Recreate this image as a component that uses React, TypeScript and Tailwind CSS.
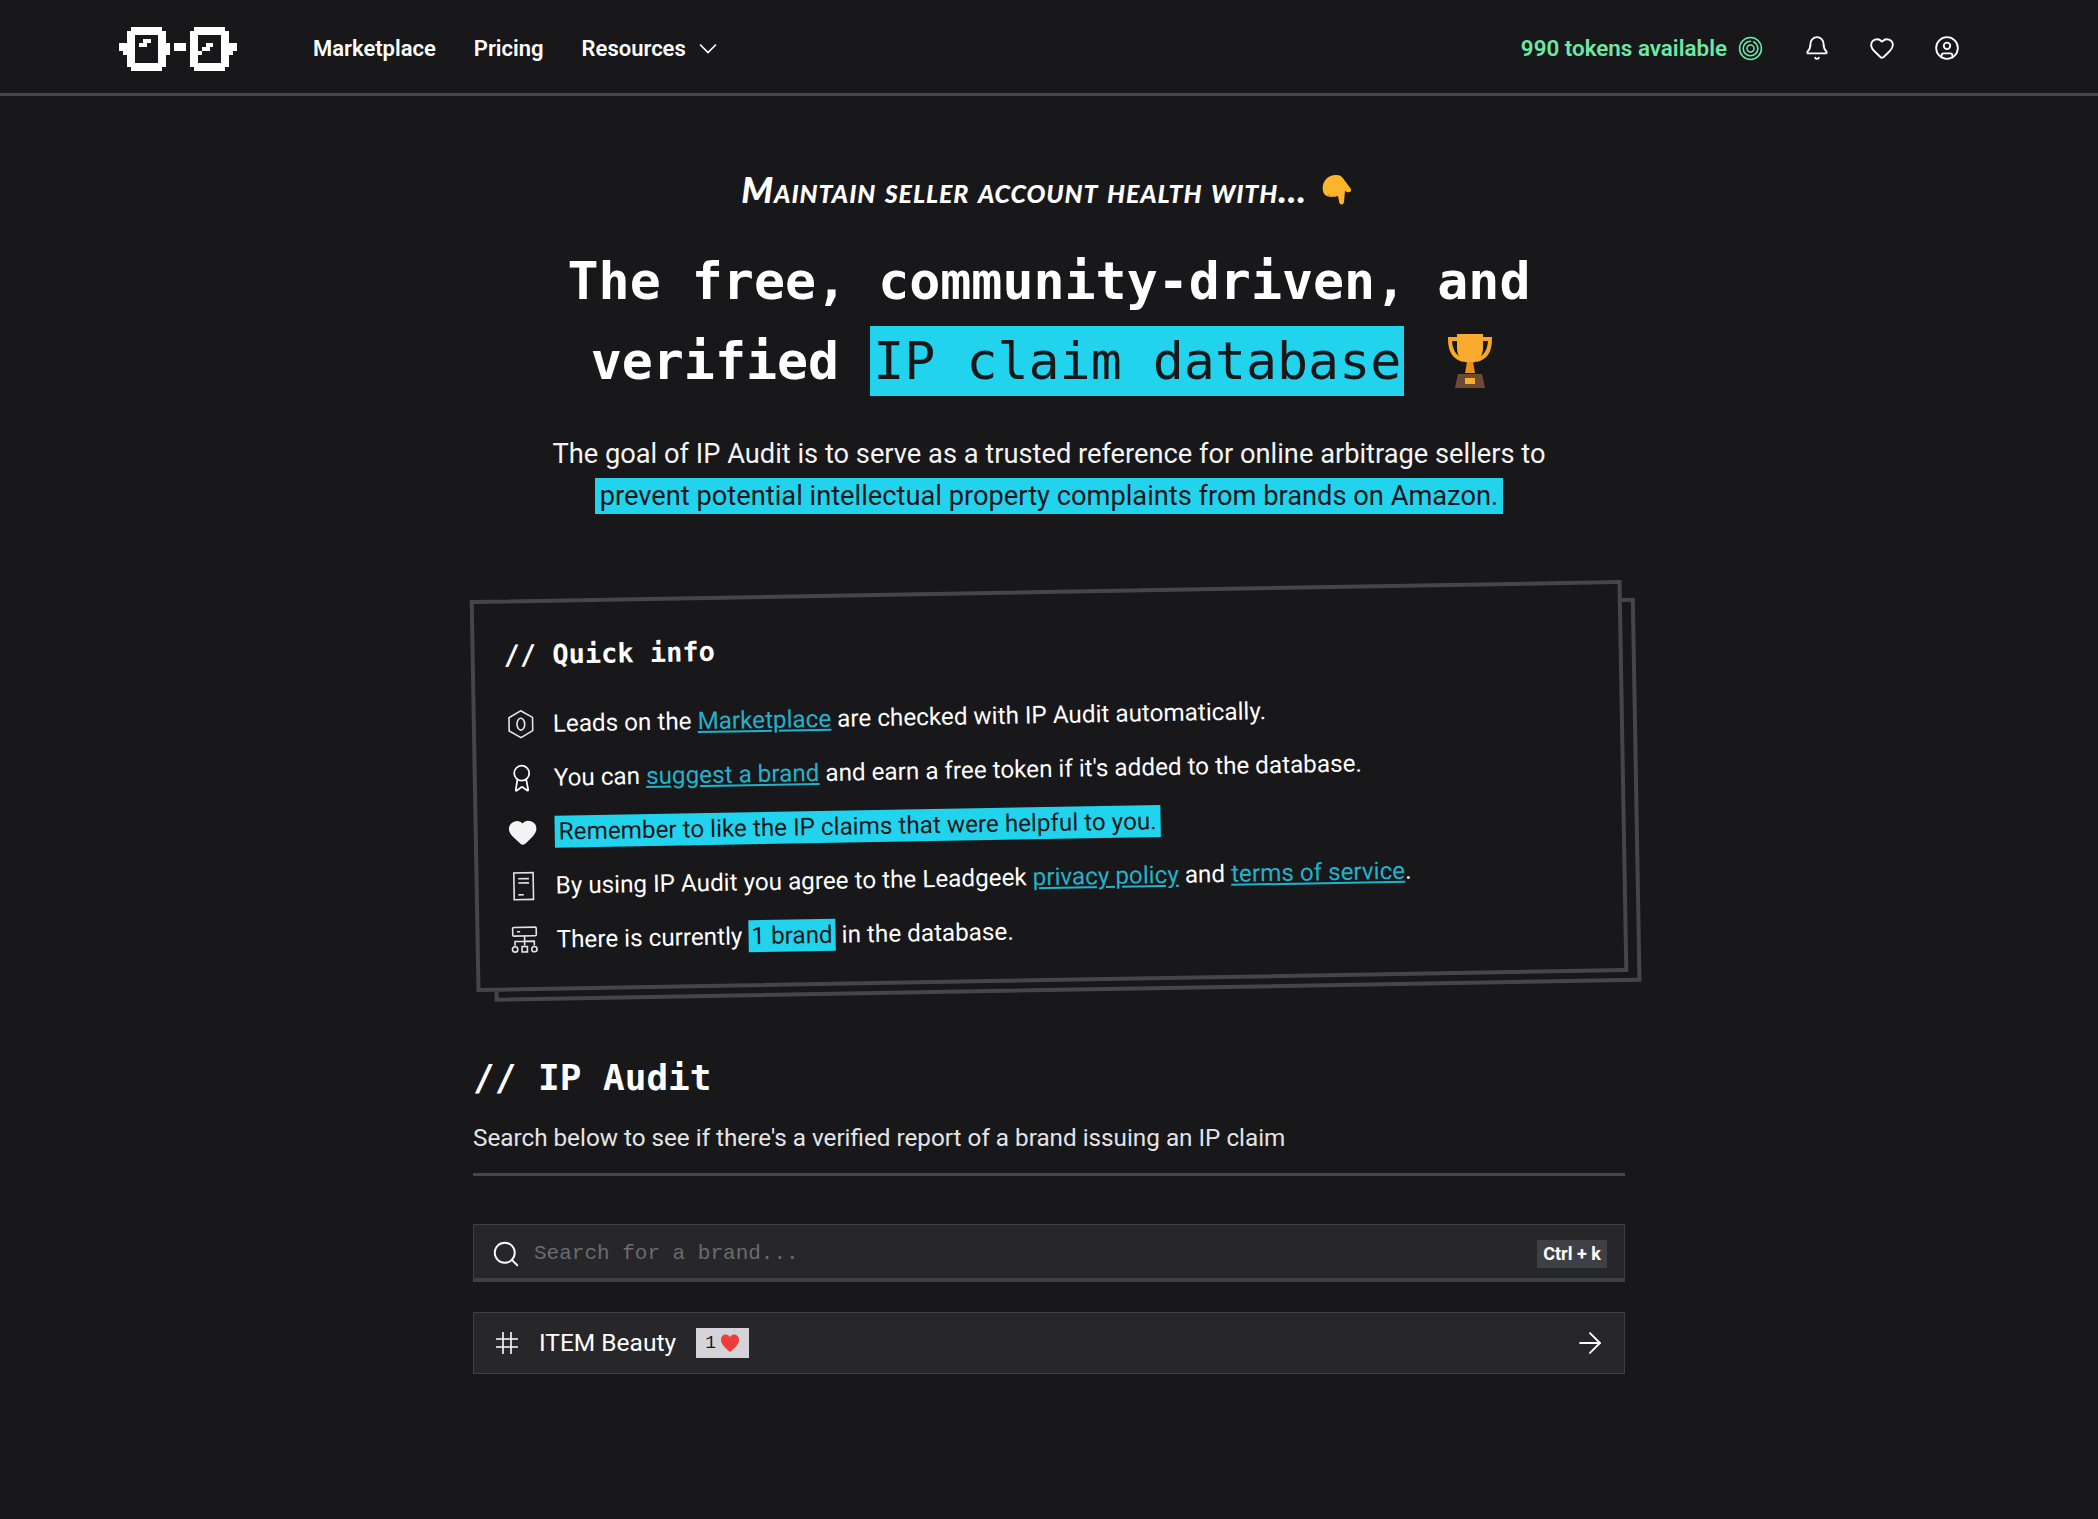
import React from 'react';
import { Bell, Heart, CircleUser, Search, ArrowRight, Award } from 'lucide-react';

const LOGO_ROWS = [
  '...########........########...',
  '..##########......##########..',
  '..##......##......##......##..',
  '..##..##..##......##......##..',
  '####.##...###.###.##..##..####',
  '####......###.###.##.##...####',
  '.###......###.....###.....###.',
  '..##......##......##......##..',
  '..##......##......##......##..',
  '..##########......##########..',
  '...########........########...',
];

const Logo = () => (
  <svg width="118" height="44" viewBox="0 0 30 11" shapeRendering="crispEdges" fill="#fff">
    {LOGO_ROWS.map((row, y) =>
      row.split('').map((c, x) => (c === '#' ? <rect key={`${x}-${y}`} x={x} y={y} width="1.02" height="1.02" /> : null)),
    )}
  </svg>
);

const TokenIcon = () => (
  <svg width="25" height="25" viewBox="0 0 24 24" fill="none" stroke="#6ee7a7" strokeWidth="1.5" strokeLinecap="round">
    <circle cx="12" cy="12" r="10.5" />
    <path d="M12 5a7 7 0 1 0 7 7" />
    <path d="M19 12a7 7 0 0 0-4-6.3" />
    <circle cx="12" cy="12" r="3.4" />
  </svg>
);

const PointDown = () => (
  <svg width="30" height="32" viewBox="0 0 30 32">
    <path d="M2 18C0 8 8 1 16 2c4 0 6 3 8 6l6 8c1 2-2 4-4 3l-2-1-1 11c-1 4-5 3-5-1l-1-5c-7 2-14 1-15-5z" fill="#fbb52b" />
    <path d="M8 21v2M12 22v2" stroke="#e08e0b" strokeWidth="1.2" fill="none" />
  </svg>
);

const Trophy = () => (
  <svg width="48" height="56" viewBox="0 0 48 56">
    <path d="M11 7H4c0 12 4 19 14 21M37 7h7c0 12-4 19-14 21" fill="none" stroke="#f9a825" strokeWidth="4" />
    <path d="M11 2h26v14c0 9-6 15-13 15S11 25 11 16z" fill="#fbab2d" />
    <path d="M21 30h6l2 11H19z" fill="#e8921a" />
    <path d="M12 42h24l3 14H9z" fill="#6d4a37" />
    <rect x="19" y="46" width="10" height="6" fill="#fbab2d" />
  </svg>
);

const SmallHeart = () => (
  <svg width="20" height="20" viewBox="0 0 20 20">
    <path d="M10 19C4 14 1 11 1 6.500 1 3 3.500 1.500 5.800 1.500 7.700 1.500 9.200 2.500 10 4.300c.8-1.800 2.300-2.800 4.200-2.800C16.500 1.500 19 3 19 6.500 19 11 16 14 10 19z" fill="#ef3b3b" />
  </svg>
);

const HexIcon = () => (
  <svg width="30" height="30" viewBox="0 0 28 28" fill="none" stroke="#e4e4e7" strokeWidth="1.5">
    <path d="M14 1.500l11 6.300v12.400l-11 6.300-11-6.300V7.800z" />
    <ellipse cx="14" cy="14" rx="3.600" ry="5.500" />
  </svg>
);

const DocIcon = () => (
  <svg width="30" height="30" viewBox="0 0 28 28" fill="none" stroke="#e4e4e7" strokeWidth="1.5">
    <rect x="5" y="1.500" width="18" height="25" />
    <path d="M9 7h10M9 11h10M9 22h5" />
  </svg>
);

const TreeIcon = () => (
  <svg width="30" height="30" viewBox="0 0 28 28" fill="none" stroke="#e4e4e7" strokeWidth="1.5">
    <rect x="3" y="2" width="22" height="8" rx="1" />
    <path d="M7 6h3M14 10v9M5 19v-4h18v4" />
    <circle cx="5" cy="22.500" r="2.500" />
    <rect x="11.500" y="20" width="5" height="5" />
    <circle cx="23" cy="22.500" r="2.500" />
  </svg>
);

const HashIcon = () => (
  <svg width="24" height="24" viewBox="0 0 24 24" fill="none" stroke="#fff" strokeWidth="1.6">
    <path d="M8 1v22M16 1v22M1 8h22M1 16h22" />
  </svg>
);

const Chevron = () => (
  <svg width="18" height="11" viewBox="0 0 18 11" fill="none" stroke="#fff" strokeWidth="1.6">
    <path d="M1 1.500l8 8 8-8" />
  </svg>
);

const NavLink = ({ children }: { children: React.ReactNode }) => (
  <a className="text-[22px] font-semibold text-white">{children}</a>
);

const Link = ({ children }: { children: React.ReactNode }) => (
  <a className="text-[#22b3cc] underline underline-offset-2">{children}</a>
);

const Row = ({ icon, children }: { icon: React.ReactNode; children: React.ReactNode }) => (
  <li className="flex items-center gap-[16px] h-[54px]">
    <span className="flex w-[32px] justify-center">{icon}</span>
    <p>{children}</p>
  </li>
);

export default function App() {
  return (
    <div className="min-h-screen bg-[#18181b] text-white font-['Roboto',sans-serif]">
      <nav className="flex h-[96px] items-center justify-between border-b-[3px] border-[#46464a] pl-[119px] pr-[138px] pt-[4px]">
        <div className="flex items-center">
          <Logo />
          <div className="ml-[76px] flex items-center gap-[38px]">
            <NavLink>Marketplace</NavLink>
            <NavLink>Pricing</NavLink>
            <div className="flex items-center gap-[13px]">
              <NavLink>Resources</NavLink>
              <Chevron />
            </div>
          </div>
        </div>
        <div className="flex items-center">
          <span className="text-[22.4px] font-semibold text-[#6ee7a7]">990 tokens available</span>
          <span className="ml-[11px]"><TokenIcon /></span>
          <div className="ml-[41px] flex items-center gap-[39px]">
            <Bell size={26} strokeWidth={1.7} />
            <Heart size={26} strokeWidth={1.7} />
            <CircleUser size={26} strokeWidth={1.7} />
          </div>
        </div>
      </nav>

      <main className="mx-auto w-[1152px] pt-[75px]">
        <section className="flex flex-col items-center">
          <div className="mr-[6px] flex items-center gap-[14px]">
            <p className="text-[36px] font-black italic leading-[36px] tracking-[0.9px] font-['Lato',sans-serif] [font-variant:small-caps]">
              Maintain seller account health with...
            </p>
            <PointDown />
          </div>
          <h1 className="mt-[34px] text-center text-[51.6px] font-bold leading-[80px] font-['DejaVu_Sans_Mono',monospace]">
            The free, community-driven, and
            <br />
            verified{' '}
            <span className="inline-block h-[70px] bg-[#22d3ee] px-[3px] font-normal leading-[70px] text-[#18181b]">IP claim database</span>
            <span className="mb-[10px] ml-[42px] mr-[13px] inline-block align-middle"><Trophy /></span>
          </h1>
          <p className="mt-[32px] text-center text-[27.25px] leading-[42px] text-zinc-100">
            The goal of IP Audit is to serve as a trusted reference for online arbitrage sellers to
            <br />
            <span className="bg-[#22d3ee] px-[5px] py-[2px] text-[#18181b]">prevent potential intellectual property complaints from brands on Amazon.</span>
          </p>
        </section>

        <section className="relative mt-[73px] h-[392px] -rotate-1 text-[24.25px]">
          <div className="absolute left-[18px] top-[18px] h-[384px] w-[1147px] border-4 border-[#46464a]" />
          <div className="relative h-full w-full border-4 border-[#46464a] bg-[#18181b] pl-[29px] pt-[32px]">
            <h2 className="text-[27px] font-bold leading-[40px] font-['DejaVu_Sans_Mono',monospace]">// Quick info</h2>
            <ul className="mt-[22px]">
              <Row icon={<HexIcon />}>
                Leads on the <Link>Marketplace</Link> are checked with IP Audit automatically.
              </Row>
              <Row icon={<Award size={30} strokeWidth={1.4} />}>
                You can <Link>suggest a brand</Link> and earn a free token if it's added to the database.
              </Row>
              <Row icon={<Heart size={30} fill="#f4f4f5" stroke="#f4f4f5" />}>
                <span className="bg-[#22d3ee] px-[4px] py-[2px] text-[#18181b]">Remember to like the IP claims that were helpful to you.</span>
              </Row>
              <Row icon={<DocIcon />}>
                By using IP Audit you agree to the Leadgeek <Link>privacy policy</Link> and <Link>terms of service</Link>.
              </Row>
              <Row icon={<TreeIcon />}>
                There is currently <span className="bg-[#22d3ee] px-[3px] py-[2px] text-[#18181b]">1 brand</span> in the database.
              </Row>
            </ul>
          </div>
        </section>

        <section className="mt-[74px]">
          <h2 className="text-[36px] font-bold leading-[44px] font-['DejaVu_Sans_Mono',monospace]">// IP Audit</h2>
          <p className="mt-[20px] text-[24.25px] leading-[36px] text-zinc-200">
            Search below to see if there's a verified report of a brand issuing an IP claim
          </p>
          <div className="mt-[17px] h-[3px] bg-[#46464a]" />

          <div className="mt-[48px] flex h-[58px] items-center border border-b-4 border-[#3f3f46] bg-[#27272a] pl-[17px] pr-[17px] pt-[4px]">
            <Search size={30} strokeWidth={1.5} />
            <span className="ml-[13px] flex-1 text-[21px] text-[#6b6b70] font-['Liberation_Mono',monospace]">Search for a brand...</span>
            <span className="flex h-[28px] w-[70px] items-center justify-center bg-[#3f3f46] text-[18px] font-bold">Ctrl + k</span>
          </div>

          <div className="mt-[30px] flex h-[62px] items-center border border-[#3f3f46] bg-[#27272a] pl-[21px] pr-[17px]">
            <HashIcon />
            <span className="ml-[20px] text-[24.5px]">ITEM Beauty</span>
            <span className="ml-[20px] flex h-[30px] w-[53px] items-center justify-center gap-[4px] bg-[#d4d4d8] text-[18px] text-[#18181b] font-['Liberation_Mono',monospace]">
              1 <SmallHeart />
            </span>
            <span className="ml-auto"><ArrowRight size={34} strokeWidth={1.3} /></span>
          </div>
        </section>
      </main>
    </div>
  );
}
